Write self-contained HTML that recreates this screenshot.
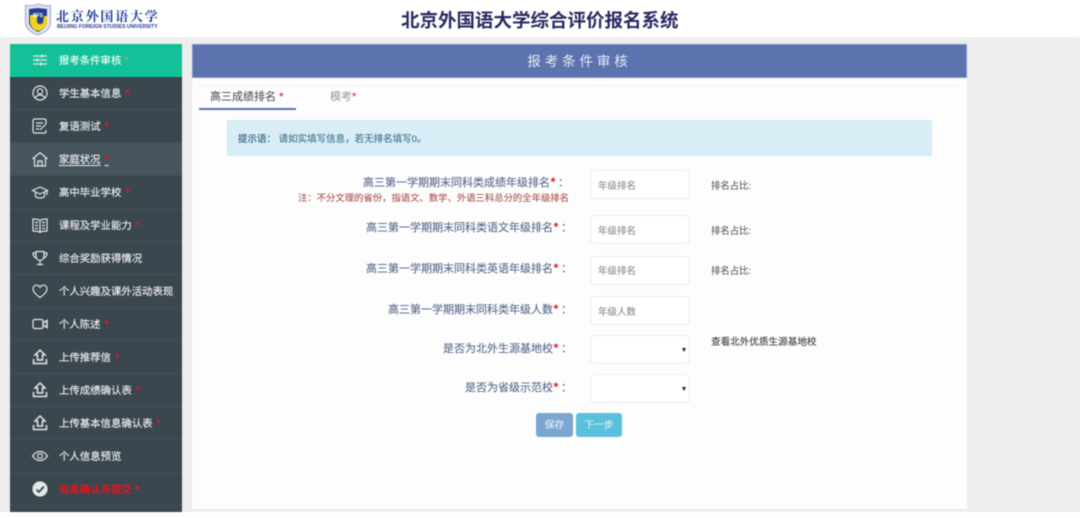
<!DOCTYPE html>
<html lang="zh-CN">
<head>
<meta charset="utf-8">
<title>北京外国语大学综合评价报名系统</title>
<style>
html,body{margin:0;padding:0;width:1080px;height:518px;overflow:hidden;background:#fff}
body{font-family:"Liberation Sans","Noto Sans CJK SC",sans-serif;position:relative}
#wrap{position:absolute;left:0;top:0;width:1080px;height:518px;filter:blur(.4px);overflow:hidden}
.a{position:absolute;white-space:nowrap}
.bg{left:0;top:37px;width:1080px;height:475px;background:#eee}
.side{left:10px;top:44px;width:172px;height:468px;background:#3a474f}
.it{position:absolute;left:0;width:172px;height:32px;border-bottom:1px solid #414f58}
.it span.t{position:absolute;left:49px;top:1px;line-height:33px;font-size:10.4px;color:#eceeef;-webkit-text-stroke:.15px #eceeef}
.it i{font-style:normal;color:#ee1420;-webkit-text-stroke:.2px #ee1420;margin-left:4px;font-size:11px}
.it svg{position:absolute;left:21px;top:7px;width:18px;height:18px;fill:none;stroke:#e2e5e6;stroke-width:1.2}
.main{left:192px;top:44px;width:775px;height:465px;background:#fdfdfd}
.head{left:192px;top:44px;width:775px;height:34px;background:#5d73b0;border:1px solid #8193c6;box-sizing:border-box;color:#e8ecf6;font-size:13.5px;letter-spacing:3.9px;line-height:34px;text-align:center}
.lab{font-size:11px;color:#56668a;text-align:right;right:511px;line-height:16px;-webkit-text-stroke:.1px #56668a}
.lab.s{right:514px;right:508px}
.lab b{display:inline-block;width:6px;margin-right:2px;text-align:center;font-weight:bold;font-size:12px;color:#f01018;-webkit-text-stroke:0}
.inp{left:590px;width:100px;background:#fff;border:1px solid #e9ecf6;border-radius:4px;box-sizing:border-box;font-size:9.5px;color:#8a8d90;padding-left:7px;-webkit-text-stroke:.1px #8a8d90}
.rat{left:711px;font-size:9.4px;color:#55585c;line-height:14px;-webkit-text-stroke:.08px #55585c}
.arr{position:absolute;right:3px;top:12px;width:0;height:0;border-left:2.2px solid transparent;border-right:2.2px solid transparent;border-top:4px solid #222}
.btn{top:413px;height:24px;border-radius:3px;color:#e8f0f6;font-size:9.8px;line-height:26px;text-align:center;-webkit-text-stroke:.1px #e8f0f6}
</style>
</head>
<body>
<div id="wrap">
<div class="a bg"></div>

<!-- logo -->
<svg class="a" style="left:24px;top:3px" width="28" height="33" viewBox="0 0 28 33">
<path d="M14 1 C19 3 23 3 26.500 2.500 L26.500 19 C26.500 26 20 30 14 32 C8 30 1.500 26 1.500 19 L1.500 2.500 C5 3 9 3 14 1Z" fill="#dfe3ee" stroke="#aab4d0" stroke-width="1.200"/>
<path d="M14 5 L23 6 L23 19 C23 24 18 27 14 29 C10 27 5 24 5 19 L5 6Z" fill="#26408f"/>
<path d="M9 12 L13 12 L13 18 C13 21 16 22 19 20 L20 13 L23 13 L23 19 C23 24 18 27 14 28 C10 27 6 24 6 18 L6 12Z" fill="#f1d21e"/>
<text x="14" y="14" font-size="5" font-weight="700" text-anchor="middle" fill="#fff" font-family="Liberation Sans">BFS</text>
</svg>
<div class="a" style="left:56px;top:6px;font-family:'Noto Serif CJK SC',serif;font-weight:700;font-size:13px;line-height:20px;letter-spacing:1.8px;color:#1c3f96">北京外国语大学</div>
<div class="a" style="left:57px;top:24px;font-size:5.100px;font-weight:700;line-height:6px;color:#243f8c">BEIJING FOREIGN STUDIES UNIVERSITY</div>

<div class="a" style="left:401px;top:7px;font-size:18.500px;font-weight:700;line-height:27px;color:#2a2a62">北京外国语大学综合评价报名系统</div>

<!-- sidebar -->
<div class="a side">
 <div class="it" style="top:0;background:#13c199;border-bottom:1px solid #13c199"><span class="t" style="color:#eafaf6;-webkit-text-stroke:.15px #eafaf6">报考条件审核<i style="margin-left:3px;color:#e88;-webkit-text-stroke:0">*</i></span>
  <svg viewBox="0 0 18 18"><path d="M2 5h14M2 9h14M2 13h14"/><path d="M11 3.500v3M6 7.500v3M10 11.500v3" stroke-width="1.500"/></svg></div>
 <div class="it" style="top:33px"><span class="t">学生基本信息<i>*</i></span>
  <svg viewBox="0 0 18 18"><circle cx="9" cy="9" r="7"/><circle cx="9" cy="7.500" r="2.600"/><path d="M4.500 14 C5 11.500 7 11 9 11 C11 11 13 11.500 13.500 14"/></svg></div>
 <div class="it" style="top:66px"><span class="t">复语测试<i>*</i></span>
  <svg viewBox="0 0 18 18"><path d="M15 7V3.500C15 2.700 14.500 2 13.500 2H3.500C2.700 2 2 2.700 2 3.500v11c0 .8.700 1.500 1.500 1.500h10c1 0 1.500-.7 1.500-1.500V13"/><path d="M5 6h7M5 9h5M5 12h3M9 13l6-6"/></svg></div>
 <div class="it" style="top:99px;background:#46545d"><span class="t" style="text-decoration:underline;text-underline-offset:2px">家庭状况<i>*</i></span>
  <svg viewBox="0 0 18 18"><path d="M1.500 9 L9 2.500 L16.500 9M3.500 8v8h11V8M7 16v-5h4v5"/></svg></div>
 <div class="it" style="top:132px"><span class="t">高中毕业学校<i>*</i></span>
  <svg viewBox="0 0 18 18"><path d="M1.500 7.500 L9 4 L16.500 7.500 L9 11Z"/><path d="M4.500 9.500v4C6 15.500 12 15.500 13.500 13.500v-4M16 8v4"/></svg></div>
 <div class="it" style="top:165px"><span class="t">课程及学业能力<i>*</i></span>
  <svg viewBox="0 0 18 18"><path d="M2 3 C4.500 3 7 3.300 9 4.500 C11 3.300 13.500 3 16 3V15C13.500 15 11 15.300 9 16.300 C7 15.300 4.500 15 2 15ZM9 4.500V16M4 6.500h3M4 9.500h3M4 12.500h3M11 6.500h3M11 9.500h3M11 12.500h3"/></svg></div>
 <div class="it" style="top:198px"><span class="t">综合奖励获得情况</span>
  <svg viewBox="0 0 18 18"><path d="M5 2.500h8V7C13 10 11 11.500 9 11.500 C7 11.500 5 10 5 7ZM5 4H2C2 7 3.500 8.500 5.500 9M13 4h3C16 7 14.500 8.500 12.500 9M9 11.500V15M6 15.500h6"/></svg></div>
 <div class="it" style="top:231px"><span class="t">个人兴趣及课外活动表现</span>
  <svg viewBox="0 0 18 18"><path d="M9 15.500 C5 12.500 2 10 2 6.800 C2 4.500 3.800 3.200 5.500 3.200 C7 3.200 8.300 4 9 5.300 C9.700 4 11 3.200 12.500 3.200 C14.200 3.200 16 4.500 16 6.800 C16 10 13 12.500 9 15.500Z"/></svg></div>
 <div class="it" style="top:264px"><span class="t">个人陈述<i>*</i></span>
  <svg viewBox="0 0 18 18"><rect x="2" y="4.500" width="10" height="9" rx="1.500"/><path d="M12 8 L16 5.500 V12.500 L12 10" stroke-width="1.500"/></svg></div>
 <div class="it" style="top:297px"><span class="t">上传推荐信<i>*</i></span>
  <svg viewBox="0 0 18 18" style="stroke-width:1.500"><path d="M9 2 L14 7H11.500V12H6.500V7H4Z"/><path d="M2.500 11v4.500h13V11"/></svg></div>
 <div class="it" style="top:330px"><span class="t">上传成绩确认表<i>*</i></span>
  <svg viewBox="0 0 18 18" style="stroke-width:1.500"><path d="M9 2 L14 7H11.500V12H6.500V7H4Z"/><path d="M2.500 11v4.500h13V11"/></svg></div>
 <div class="it" style="top:363px"><span class="t">上传基本信息确认表<i>*</i></span>
  <svg viewBox="0 0 18 18" style="stroke-width:1.500"><path d="M9 2 L14 7H11.500V12H6.500V7H4Z"/><path d="M2.500 11v4.500h13V11"/></svg></div>
 <div class="it" style="top:396px"><span class="t">个人信息预览</span>
  <svg viewBox="0 0 18 18"><path d="M1.500 9 C4 5.500 6.500 4.500 9 4.500 C11.500 4.500 14 5.500 16.500 9 C14 12.500 11.500 13.500 9 13.500 C6.500 13.500 4 12.500 1.500 9Z"/><circle cx="9" cy="9" r="2.400"/></svg></div>
 <div class="it" style="top:429px"><span class="t" style="color:#f0101a;font-weight:700;-webkit-text-stroke:0">信息确认与提交<i style="margin-left:3px">*</i></span>
  <svg viewBox="0 0 18 18"><circle cx="9" cy="9" r="7" fill="#e6e8e9"/><path d="M5.500 9.500 L8 12 L13 6.500" stroke="#3a474f" stroke-width="1.800"/></svg></div>
</div>

<!-- main -->
<div class="a main"></div>
<div class="a head">报考条件审核</div>

<div class="a" style="left:199px;top:85px;width:760px;height:1px;background:#f0f0f0"></div>
<div class="a" style="left:210px;top:89px;font-size:11px;line-height:17px;color:#4f5256;-webkit-text-stroke:.1px #4f5256">高三成绩排名 <span style="color:#e8101a">*</span></div>
<div class="a" style="left:199px;top:108px;width:97px;height:2px;background:#5d73b0"></div>
<div class="a" style="left:330px;top:89px;font-size:11px;line-height:17px;color:#a0a0a0;-webkit-text-stroke:.1px #a0a0a0">模考<span style="color:#e8101a">*</span></div>

<div class="a" style="left:227px;top:120px;width:705px;height:36px;background:#d9edf6;border:1px solid #cfe9f1;box-sizing:border-box;border-radius:2px"></div>
<div class="a" style="left:238px;top:132px;font-size:9.500px;line-height:16px;color:#3e6f8a;-webkit-text-stroke:.1px #3e6f8a"><span style="font-weight:500">提示语：</span> 请如实填写信息，若无排名填写0。</div>

<div class="a lab" style="top:174px">高三第一学期期末同科类成绩年级排名<b>*</b>：</div>
<div class="a" style="left:298px;top:191px;font-size:9.350px;line-height:14px;color:#a9504c;-webkit-text-stroke:.1px #a9504c">注：不分文理的省份，指语文、数学、外语三科总分的全年级排名</div>
<div class="a lab s" style="top:219px">高三第一学期期末同科类语文年级排名<b>*</b>：</div>
<div class="a lab s" style="top:260px">高三第一学期期末同科类英语年级排名<b>*</b>：</div>
<div class="a lab s" style="top:301px">高三第一学期期末同科类年级人数<b>*</b>：</div>
<div class="a lab s" style="top:340px">是否为北外生源基地校<b>*</b>：</div>
<div class="a lab s" style="top:379px">是否为省级示范校<b>*</b>：</div>

<div class="a inp" style="top:170px;height:29px;line-height:31px">年级排名</div>
<div class="a inp" style="top:215px;height:29px;line-height:31px">年级排名</div>
<div class="a inp" style="top:256px;height:29px;line-height:29px">年级排名</div>
<div class="a inp" style="top:296px;height:29px;line-height:31px">年级人数</div>
<div class="a inp" style="top:335px;height:29px"><span class="arr"></span></div>
<div class="a inp" style="top:374px;height:29px"><span class="arr"></span></div>

<div class="a rat" style="top:179px">排名占比:</div>
<div class="a rat" style="top:224px">排名占比:</div>
<div class="a rat" style="top:264px">排名占比:</div>
<div class="a rat" style="left:711px;top:336px;font-size:9.600px;font-weight:500">查看北外优质生源基地校</div>

<div class="a btn" style="left:536px;width:37px;background:#7ba6d0">保存</div>
<div class="a btn" style="left:576px;width:46px;background:#5bc0de">下一步</div>
</div>
</body>
</html>
